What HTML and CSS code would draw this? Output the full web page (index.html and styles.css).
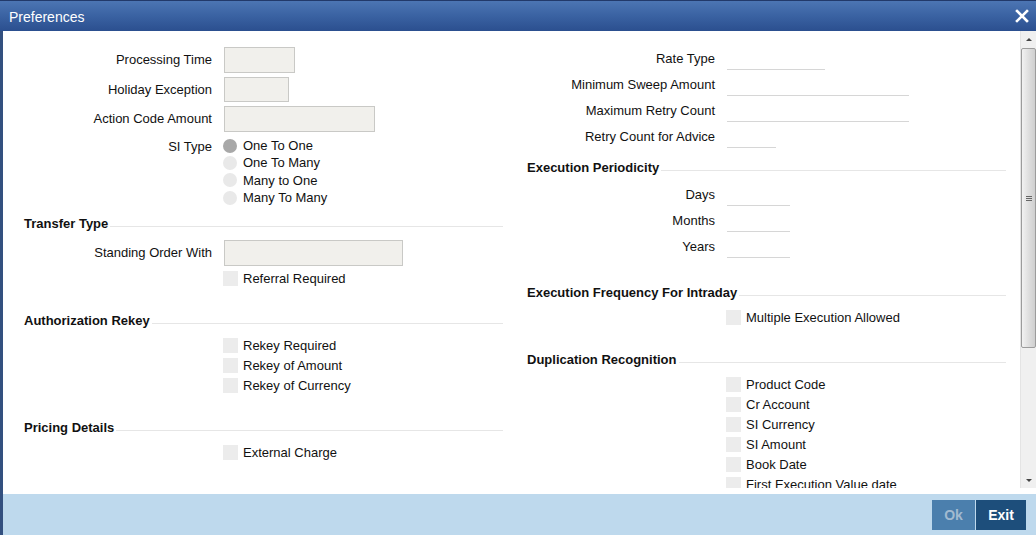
FILE: index.html
```html
<!DOCTYPE html>
<html lang="en">
<head>
  <meta charset="UTF-8">
  <meta name="viewport" content="width=device-width, initial-scale=1.0">
  <title>Preferences</title>
  <link rel="stylesheet" href="styles.css">
</head>
<body>
  <div class="window">
    <div class="titlebar">
      <span class="title">Preferences</span>
      <button class="close-btn" aria-label="Close">
        <svg width="14" height="14" viewBox="0 0 14 14">
          <path d="M2 2 L12 12 M12 2 L2 12" stroke="#fff" stroke-width="2.6" stroke-linecap="square"/>
        </svg>
      </button>
    </div>

    <div class="frame">
      <div class="body">
        <div class="content">
          <!-- left column -->
          <div class="column left-col">
            <div class="row">
              <label class="lbl" for="processing-time">Processing Time</label>
              <input type="text" id="processing-time" class="box w71">
            </div>
            <div class="row gap4">
              <label class="lbl short" for="holiday-exception">Holiday Exception</label>
              <input type="text" id="holiday-exception" class="box w65 h25">
            </div>
            <div class="row gap4">
              <label class="lbl" for="action-code">Action Code Amount</label>
              <input type="text" id="action-code" class="box w151">
            </div>
            <div class="row radio-row">
              <span class="lbl radio-lbl">SI Type</span>
              <div class="radio-list">
                <div class="radio-item"><span class="radio checked"></span>One To One</div>
                <div class="radio-item"><span class="radio"></span>One To Many</div>
                <div class="radio-item"><span class="radio"></span>Many to One</div>
                <div class="radio-item"><span class="radio"></span>Many To Many</div>
              </div>
            </div>

            <div class="section-title mt9">Transfer Type</div>
            <div class="row mt9">
              <label class="lbl" for="standing-order">Standing Order With</label>
              <input type="text" id="standing-order" class="box w179">
            </div>
            <div class="row check-row mt2">
              <span></span>
              <div class="check-item"><span class="check"></span>Referral Required</div>
            </div>

            <div class="section-title mt24">Authorization Rekey</div>
            <div class="row check-row mt7">
              <span></span>
              <div class="check-item"><span class="check"></span>Rekey Required</div>
            </div>
            <div class="row check-row">
              <span></span>
              <div class="check-item"><span class="check"></span>Rekey of Amount</div>
            </div>
            <div class="row check-row">
              <span></span>
              <div class="check-item"><span class="check"></span>Rekey of Currency</div>
            </div>

            <div class="section-title mt24">Pricing Details</div>
            <div class="row check-row mt7">
              <span></span>
              <div class="check-item"><span class="check"></span>External Charge</div>
            </div>
          </div>

          <!-- right column -->
          <div class="column right-col">
            <div class="row">
              <span class="lbl">Rate Type</span>
              <span class="line-field w98"></span>
            </div>
            <div class="row">
              <span class="lbl">Minimum Sweep Amount</span>
              <span class="line-field w182"></span>
            </div>
            <div class="row">
              <span class="lbl">Maximum Retry Count</span>
              <span class="line-field w182"></span>
            </div>
            <div class="row">
              <span class="lbl">Retry Count for Advice</span>
              <span class="line-field w49"></span>
            </div>

            <div class="section-title mt9">Execution Periodicity</div>
            <div class="row mt7">
              <span class="lbl">Days</span>
              <span class="line-field w63"></span>
            </div>
            <div class="row">
              <span class="lbl">Months</span>
              <span class="line-field w63"></span>
            </div>
            <div class="row">
              <span class="lbl">Years</span>
              <span class="line-field w63"></span>
            </div>

            <div class="section-title mt24">Execution Frequency For Intraday</div>
            <div class="row check-row mt7">
              <span></span>
              <div class="check-item"><span class="check"></span>Multiple Execution Allowed</div>
            </div>

            <div class="section-title mt24">Duplication Recognition</div>
            <div class="row check-row mt7">
              <span></span>
              <div class="check-item"><span class="check"></span>Product Code</div>
            </div>
            <div class="row check-row">
              <span></span>
              <div class="check-item"><span class="check"></span>Cr Account</div>
            </div>
            <div class="row check-row">
              <span></span>
              <div class="check-item"><span class="check"></span>SI Currency</div>
            </div>
            <div class="row check-row">
              <span></span>
              <div class="check-item"><span class="check"></span>SI Amount</div>
            </div>
            <div class="row check-row">
              <span></span>
              <div class="check-item"><span class="check"></span>Book Date</div>
            </div>
            <div class="row check-row">
              <span></span>
              <div class="check-item"><span class="check"></span>First Execution Value date</div>
            </div>
          </div>
        </div>

        <div class="scrollbar">
          <div class="sb-btn"><span class="arrow-up"></span></div>
          <div class="sb-thumb"><span class="grip"></span></div>
          <div class="sb-track"></div>
          <div class="sb-btn"><span class="arrow-down"></span></div>
        </div>
      </div>

      <div class="footer">
        <button class="btn btn-ok">Ok</button>
        <button class="btn btn-exit">Exit</button>
      </div>
    </div>
  </div>
</body>
</html>
```

FILE: styles.css
```css
/* Global Styles */
* {
  margin: 0;
  padding: 0;
  box-sizing: border-box;
  font-family: "Liberation Sans", Arial, sans-serif;
}

html, body {
  width: 1036px;
  height: 535px;
  overflow: hidden;
  background: #fff;
}

body {
  font-size: 13px;
  color: #111;
}

.window {
  display: flex;
  flex-direction: column;
  height: 535px;
}

/* Title bar */
.titlebar {
  height: 31px;
  display: flex;
  align-items: center;
  justify-content: space-between;
  padding: 0 6px 0 9px;
  border-top: 1px solid #22396a;
  background: linear-gradient(#4c75b3, #3a62a2 50%, #2b4f8f);
}

.title {
  color: #fff;
  font-size: 14px;
  padding-top: 1px;
}

.close-btn {
  background: none;
  border: none;
  width: 14px;
  height: 14px;
  display: flex;
  margin-right: 1px;
}

/* Frame */
.frame {
  flex: 1;
  display: flex;
  flex-direction: column;
  border-left: 3px solid #33507f;
}

.body {
  height: 463px;
  display: flex;
  padding-bottom: 6px;
  background: #fff;
}

.content {
  flex: 1;
  overflow: hidden;
  display: grid;
  grid-template-columns: 479px 479px;
  column-gap: 24px;
  padding-left: 21px;
}

.left-col {
  padding-top: 16px;
}

.right-col {
  padding-top: 15px;
}

.row {
  display: grid;
  grid-template-columns: 188px auto;
  column-gap: 12px;
  align-items: start;
}

.lbl {
  text-align: right;
  line-height: 26px;
  white-space: nowrap;
}

.lbl.short {
  line-height: 25px;
}

.gap4 {
  margin-top: 4px;
}

.mt2 { margin-top: 2px; }
.mt7 { margin-top: 7px; }
.mt9 { margin-top: 9px; }
.mt24 { margin-top: 24px; }

/* grey boxed inputs */
.box {
  height: 26px;
  background: #f1f0ec;
  border: 1px solid #c9c9c6;
  outline: none;
  font-size: 13px;
}

.h25 { height: 25px; }
.w65 { width: 65px; }
.w71 { width: 71px; }
.w151 { width: 151px; }
.w179 { width: 179px; }

/* underline inputs */
.line-field {
  display: block;
  height: 24px;
  border-bottom: 1px solid #d6d6d6;
}

.w49 { width: 49px; }
.w63 { width: 63px; }
.w98 { width: 98px; }
.w182 { width: 182px; }

/* radios */
.radio-row {
  margin-top: 5px;
}

.radio-lbl {
  line-height: 20px;
}

.radio-item {
  height: 17.3px;
  display: flex;
  align-items: center;
  margin-left: -1px;
  white-space: nowrap;
}

.radio {
  width: 14px;
  height: 14px;
  border-radius: 50%;
  background: #e9e9e9;
  margin-right: 6px;
}

.radio.checked {
  background: #a8a8a8;
}

/* checkboxes */
.check-row .check-item {
  height: 20px;
  display: flex;
  align-items: center;
  margin-left: -1px;
  white-space: nowrap;
}

.check {
  width: 15px;
  height: 15px;
  background: #ececec;
  margin-right: 5px;
}

/* section headers */
.section-title {
  height: 16px;
  display: flex;
  align-items: center;
  font-weight: bold;
  white-space: nowrap;
}

.section-title::after {
  content: "";
  flex: 1;
  height: 1px;
  background: #e6e6e6;
  margin: 7px 0 0 2px;
}

/* fake scrollbar */
.scrollbar {
  width: 16px;
  display: flex;
  flex-direction: column;
  background: #f0f0f0;
  border-left: 1px solid #e4e4e4;
}

.sb-btn {
  height: 16px;
  display: flex;
  align-items: center;
  justify-content: center;
}

.arrow-up {
  width: 0;
  height: 0;
  border-left: 3px solid transparent;
  border-right: 3px solid transparent;
  border-bottom: 3px solid #444;
}

.arrow-down {
  width: 0;
  height: 0;
  border-left: 3px solid transparent;
  border-right: 3px solid transparent;
  border-top: 3px solid #444;
}

.sb-thumb {
  height: 300px;
  margin: 1px 0 0 0;
  border: 1px solid #9c9c9c;
  border-radius: 2px;
  background: linear-gradient(to right, #f2f2f2, #dcdcdc 60%, #cfcfcf);
  display: flex;
  align-items: center;
  justify-content: center;
}

.grip {
  width: 6px;
  height: 5px;
  border-top: 1px solid #666;
  border-bottom: 1px solid #666;
  background: linear-gradient(transparent 1px, #666 1px, #666 2px, transparent 2px);
}

.sb-track {
  flex: 1;
}

/* footer */
.footer {
  flex: 1;
  display: flex;
  justify-content: flex-end;
  align-items: flex-start;
  gap: 1px;
  padding: 6px 10px 0 0;
  background: #bed9ed;
}

.btn {
  height: 30px;
  border: none;
  font-size: 14px;
  font-weight: bold;
  cursor: pointer;
}

.btn-ok {
  width: 43px;
  background: #4b7fad;
  color: #a2bad0;
}

.btn-exit {
  width: 50px;
  background: #1d4e7b;
  color: #fff;
}
```
